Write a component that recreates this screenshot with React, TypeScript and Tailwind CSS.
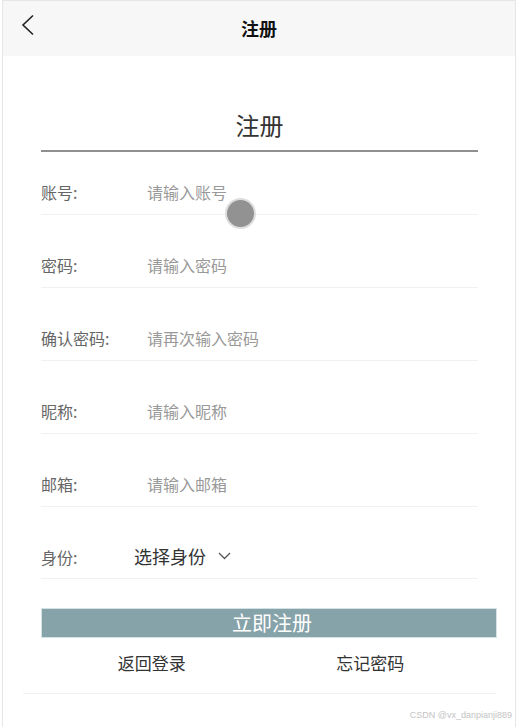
import { useState } from "react";

const fields = [
  { key: "account", label: "账号:", placeholder: "请输入账号", type: "text" },
  { key: "password", label: "密码:", placeholder: "请输入密码", type: "password" },
  { key: "confirm", label: "确认密码:", placeholder: "请再次输入密码", type: "password" },
  { key: "nickname", label: "昵称:", placeholder: "请输入昵称", type: "text" },
  { key: "email", label: "邮箱:", placeholder: "请输入邮箱", type: "text" },
];

const font = "font-['Microsoft_YaHei','Noto_Sans_CJK_SC',sans-serif]";

function BackIcon() {
  return (
    <svg width="14" height="22" viewBox="0 0 14 22" fill="none">
      <polyline points="12,1.5 2,11 12,20.5" stroke="#222" strokeWidth="1.6" strokeLinejoin="miter" />
    </svg>
  );
}

function ChevronDown() {
  return (
    <svg width="13" height="8" viewBox="0 0 13 8" fill="none">
      <polyline points="1,1 6.5,6.5 12,1" stroke="#555" strokeWidth="1.3" />
    </svg>
  );
}

export default function App() {
  const [values, setValues] = useState<Record<string, string>>({});

  return (
    <div className={`relative h-[727px] w-[516px] overflow-hidden bg-white pl-[2px] ${font}`}>
      <div className="h-full border-l border-r border-t border-[#e6e6ea]">
        {/* header */}
        <header className="relative flex h-[55px] items-center justify-center bg-[#f7f7f8]">
          <button type="button" className="absolute left-[18px] top-[13px]">
            <BackIcon />
          </button>
          <h1 className="text-[18px] font-bold text-[#111]">注册</h1>
        </header>

        <div className="ml-[38px] w-[437px] pt-[49px]">
          <h2 className="h-[40px] text-center text-[24px] leading-[40px] text-[#333]">注册</h2>
          <div className="mt-[5px] h-[1.5px] bg-[#8f8f8f]" />

          {fields.map((f, i) => (
            <div
              key={f.key}
              className={`flex items-end border-b border-[#f1f1f1] pb-[12px] ${i === 0 ? "h-[63px]" : "h-[73px]"}`}
            >
              <span className="w-[106px] text-[16px] leading-[20px] text-[#666]">{f.label}</span>
              <input
                type={f.type}
                value={values[f.key] ?? ""}
                onChange={(e) => setValues({ ...values, [f.key]: e.target.value })}
                placeholder={f.placeholder}
                className="flex-1 bg-transparent text-[16px] leading-[20px] text-[#333] outline-none placeholder:text-[#999]"
              />
            </div>
          ))}

          <div className="flex h-[72px] items-end border-b border-[#f1f1f1] pb-[11px]">
            <span className="w-[93px] text-[16px] leading-[20px] text-[#666]">身份:</span>
            <button type="button" className="flex items-center gap-[12px] text-[18px] leading-[22px] text-[#333]">
              选择身份
              <ChevronDown />
            </button>
          </div>

          <button
            type="button"
            className="mt-[29px] flex h-[30px] w-[456px] items-center justify-center border border-[#d4e2e6] bg-[#87a3aa] pl-[6px] text-[20px] text-white"
          >
            立即注册
          </button>

          <div className="flex h-[50px] items-center text-[17px] text-[#333]">
            <span className="w-[222px] text-center">返回登录</span>
            <span className="w-[216px] text-center">忘记密码</span>
          </div>
        </div>

        <div className="ml-[20px] mt-[5px] h-px w-[473px] bg-[#f1f1f1]" />
      </div>

      {/* touch indicator */}
      <div className="pointer-events-none absolute left-[227px] top-[200px] h-[27px] w-[27px] rounded-full bg-[#929292] shadow-[0_0_0_2px_rgba(200,200,200,0.6)]" />

      <span className="pointer-events-none absolute bottom-[5px] right-[4px] font-['Liberation_Sans',sans-serif] text-[9px] text-[#c4c4c4]">
        CSDN @vx_danpianji889
      </span>
    </div>
  );
}
